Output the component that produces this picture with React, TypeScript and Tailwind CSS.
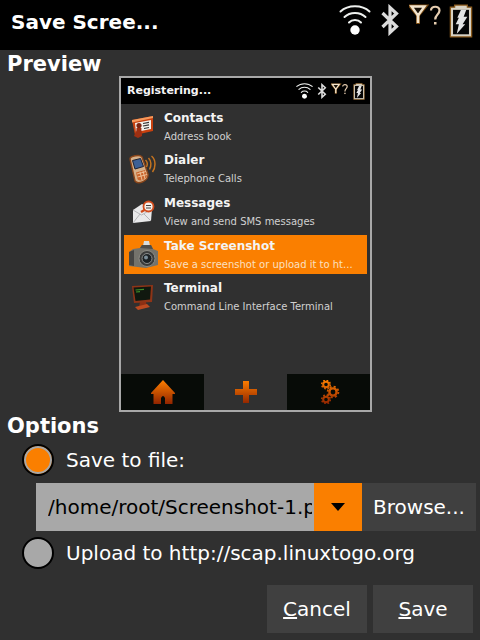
import { useState } from "react";

type IconProps = { className?: string };

function WifiIcon({ className }: IconProps) {
  return (
    <svg viewBox="0 0 32 30" className={className} fill="none" stroke="#eef0ee" strokeLinecap="round">
      <path d="M1.500 6.500C9-.5 23-.5 30.500 6.500" strokeWidth="2" />
      <path d="M5.500 12C11 6.500 21 6.500 26.500 12" strokeWidth="2" />
      <path d="M10 17.500C13 14.300 19 14.300 22 17.500" strokeWidth="2" />
      <circle cx="16" cy="25" r="4.700" fill="#fff" stroke="none" />
    </svg>
  );
}

function BluetoothIcon({ className }: IconProps) {
  return (
    <svg viewBox="0 0 18 32" className={className} fill="none" stroke="#dcdcdc" strokeWidth="3.200">
      <path d="M1.500 9 15.500 22.500 9 28.500V3.500L15.500 9.500 1.500 23" />
    </svg>
  );
}

function SignalIcon({ className }: IconProps) {
  return (
    <svg viewBox="0 0 32 22" className={className} fill="none">
      <path d="M2 2.500H16L9 11ZM9 2.500V20" stroke="#7a4a10" strokeWidth="4" />
      <path d="M2.500 2.500H15.500L9 11.500Z" fill="#1a1208" stroke="#f3e4cc" strokeWidth="2.400" />
      <path d="M9 9V19" stroke="#f3e4cc" strokeWidth="2.600" />
      <path d="M22 6.500C22 1.500 30.500 1.500 30.500 6.500 30.500 10.500 26.200 10.500 26.200 15.500" stroke="#e6cdb0" strokeWidth="2.200" />
      <rect x="25" y="18" width="2.500" height="2.500" fill="#e6cdb0" />
    </svg>
  );
}

function BatteryIcon({ className }: IconProps) {
  return (
    <svg viewBox="0 0 22 32" className={className}>
      <path d="M5 1H17V3H21V31H1V3H5Z" fill="#d8d2c4" stroke="#8a5a1c" strokeWidth="1.200" />
      <rect x="3.500" y="5.500" width="15" height="23" fill="#050505" />
      <path d="M11 5.500H16L13.500 12H17L12.500 19H15L7 28 9 19H6L9 13H7.500Z" fill="#e4e4e4" />
    </svg>
  );
}

function ContactsIcon() {
  return (
    <svg viewBox="0 0 30 30" className="size-[30px]">
      <path d="M4 8 25 4V19L7 23Z" fill="#c8410f" />
      <path d="M4 8 25 4V6L4 10.500Z" fill="#f59a5c" />
      <path d="M7 11 23 8V17L8 20Z" fill="#f4f1ec" />
      <path d="M15 11.500 21 10.300M15 14 21 12.800M16 16.500 21 15.500" stroke="#333" strokeWidth="1.200" />
      <circle cx="11" cy="13.500" r="2.600" fill="#7d2410" />
      <path d="M6 24C7 21 8.500 21 8.500 16H13.500C13 20 14.500 21 14 24L10 26Z" fill="#9e2f12" />
    </svg>
  );
}

function DialerIcon() {
  return (
    <svg viewBox="0 0 30 30" className="size-[30px]" fill="none">
      <path d="M2 5C2 2 12 0 14 3L20 20C21 27 10 31 7 27Z" fill="#d5b08a" stroke="#8a4519" strokeWidth="1.400" />
      <path d="M4.500 6.500 12.500 4.500 15.500 12.500 7 15Z" fill="#3d6096" stroke="#1c2233" />
      <path d="M8 18.500 17 16 19 21C19 26 11 28 9.500 25Z" fill="#c9652c" />
      <path d="M9 20 18 17.500M9.500 23 19 20.500M12 18 14 26M15 17 17 25" stroke="#f2d0ac" strokeWidth=".8" />
      <path d="M17.500 6C19.500 8 19.500 11 18.500 13M20.500 4C23.500 7 23.500 12 21.500 15.500M23.500 2C28.500 6 27.500 14 24.500 18" stroke="#c4731f" strokeWidth="1.500" />
    </svg>
  );
}

function MessagesIcon() {
  return (
    <svg viewBox="0 0 30 30" className="size-[30px]">
      <path d="M5 13 14 7 24 12 23 24 5 26Z" fill="#e9e9ea" />
      <path d="M5 13 13.500 18 24 12M5 26 12 17M23 24 16 17" fill="none" stroke="#b5b5b8" />
      <circle cx="20.500" cy="9.500" r="5" fill="#f5efe9" stroke="#cf4a1b" strokeWidth="1.800" />
      <path d="M18 8.500H23M18 11H23" stroke="#444" />
      <path d="M16.500 13 13 15" stroke="#cf4a1b" strokeWidth="2.200" />
    </svg>
  );
}

function CameraIcon() {
  return (
    <svg viewBox="0 0 30 30" className="size-[30px]">
      <path d="M16 1H21L22 6H15Z" fill="#d7dde0" />
      <path d="M1 12 5 9 12 8 14 5H23L25 9 30 11V25L18 28 1 26Z" fill="#74736c" />
      <path d="M1 12 6 10V26L1 25Z" fill="#454543" />
      <path d="M12 8 14 5H23L25 9Z" fill="#4d4d4a" />
      <circle cx="19" cy="18.500" r="8" fill="#3b3c3b" stroke="#8e8d86" />
      <circle cx="19" cy="18.500" r="5" fill="#1c2124" stroke="#8b8d8c" />
      <circle cx="18" cy="17.500" r="2" fill="#7b8d98" />
    </svg>
  );
}

function TerminalIcon() {
  return (
    <svg viewBox="0 0 30 30" className="size-[30px]">
      <path d="M12 20H18L19 25H11Z" fill="#8c2f14" />
      <path d="M7 25 19 22 22 25 10 28Z" fill="#bb4a20" />
      <path d="M4 4 25 3 24 20 6 21Z" fill="#8e3417" />
      <path d="M5.500 5.500 23 4.500 22 17.500 7.500 19Z" fill="#10180f" />
      <path d="M7.500 8 16 7.300M8 10 12 9.700" stroke="#3f8f2a" strokeWidth="1.200" />
    </svg>
  );
}

function EmberGradient({ id }: { id: string }) {
  return (
    <linearGradient id={id} x1="0" y1="0" x2="0" y2="24" gradientUnits="userSpaceOnUse">
      <stop offset="0" stopColor="#ff8000" />
      <stop offset="1" stopColor="#902400" />
    </linearGradient>
  );
}

function HomeIcon() {
  return (
    <svg viewBox="0 0 24 24" className="size-6">
      <EmberGradient id="home" />
      <path d="M12 0 24 13V14H21.500V24H14V18Q12 14 10 18V24H2.500V14H0V13Z" fill="url(#home)" />
    </svg>
  );
}

function PlusIcon() {
  return (
    <svg viewBox="0 0 24 24" className="size-6">
      <EmberGradient id="plus" />
      <path d="M9 1H15V9H23V15H15V23H9V15H1V9H9Z" fill="url(#plus)" />
    </svg>
  );
}

function GearsIcon() {
  return (
    <svg viewBox="0 0 24 24" className="size-6" fill="none" stroke="url(#gears)">
      <EmberGradient id="gears" />
      <circle cx="9" cy="4.500" r="2.800" strokeWidth="2" />
      <circle cx="9" cy="4.500" r="4.300" strokeWidth="1.500" strokeDasharray="1.700 1.680" />
      <circle cx="16" cy="12" r="3.600" strokeWidth="2.400" />
      <circle cx="16" cy="12" r="5.400" strokeWidth="1.800" strokeDasharray="2.100 2.140" />
      <circle cx="9" cy="19.500" r="2.800" strokeWidth="2" />
      <circle cx="9" cy="19.500" r="4.300" strokeWidth="1.500" strokeDasharray="1.700 1.680" />
    </svg>
  );
}

const apps = [
  { name: "Contacts", description: "Address book", icon: ContactsIcon },
  { name: "Dialer", description: "Telephone Calls", icon: DialerIcon },
  { name: "Messages", description: "View and send SMS messages", icon: MessagesIcon },
  { name: "Take Screenshot", description: "Save a screenshot or upload it to ht...", icon: CameraIcon, active: true },
  { name: "Terminal", description: "Command Line Interface Terminal", icon: TerminalIcon },
];

function Preview() {
  return (
    <div className="flex w-[253px] flex-col border-2 border-[#a8a8a8]">
      <div className="flex h-[26px] items-center bg-black pr-1 pl-[6px]">
        <span className="flex-1 text-[11px] leading-4 font-bold text-[#f4f4f4]">Registering...</span>
        <div className="flex items-start gap-1">
          <WifiIcon className="h-4 w-[17px]" />
          <BluetoothIcon className="h-4 w-[10px]" />
          <SignalIcon className="h-3 w-[17px]" />
          <BatteryIcon className="h-[17px] w-[14px]" />
        </div>
      </div>

      <ul className="mt-[3px] grid h-[210px] auto-rows-fr gap-[3px] px-[3px]">
        {apps.map(({ name, description, icon: Icon, active }) => (
          <li
            key={name}
            className={
              active
                ? "flex items-center gap-[6px] bg-[#fa7f00] pl-[4px]"
                : "flex items-center gap-[6px] pl-[4px]"
            }
          >
            <Icon />
            <div className="flex flex-col pt-px whitespace-nowrap">
              <span className="text-[12px] leading-[19px] font-bold text-[#f4f4f4]">{name}</span>
              <span className={active ? "text-[10px] leading-[18px] text-[#fbe0c0]" : "text-[10px] leading-[18px] text-[#d0d0d0]"}>
                {description}
              </span>
            </div>
          </li>
        ))}
      </ul>

      <div className="mt-[57px] grid h-9 grid-cols-3">
        <div className="flex items-center justify-center bg-[#070b07]">
          <HomeIcon />
        </div>
        <div className="flex items-center justify-center">
          <PlusIcon />
        </div>
        <div className="flex items-center justify-center bg-[#070b07]">
          <GearsIcon />
        </div>
      </div>
    </div>
  );
}

const radioClass =
  "size-8 shrink-0 appearance-none rounded-full border-2 border-black bg-[#a8a8a8] checked:bg-[#fa7f00] checked:shadow-[inset_0_0_0_2px_#a8a8a8]";

export default function App() {
  const [target, setTarget] = useState("file");
  const [path, setPath] = useState("/home/root/Screenshot-1.png");

  return (
    <div className="flex min-h-screen flex-col bg-[#303030] font-['DejaVu_Sans',sans-serif] text-[20px] leading-6 text-white">
      <header className="flex h-[50px] items-start bg-black pr-[7px] pl-[11px]">
        <h1 className="flex-1 pt-[10px] font-bold">Save Scree...</h1>
        <div className="flex items-start gap-2 pt-1">
          <WifiIcon className="h-8 w-8" />
          <BluetoothIcon className="h-8 w-[22px]" />
          <SignalIcon className="h-[22px] w-8" />
          <BatteryIcon className="h-[34px] w-6" />
        </div>
      </header>

      <main className="flex flex-1 flex-col">
        <h2 className="h-[26px] pt-[2px] pl-[7px] text-[21px] font-bold">Preview</h2>
        <div className="flex justify-center pl-[11px]">
          <Preview />
        </div>

        <h2 className="h-8 pt-[2px] pl-[7px] text-[21px] font-bold">Options</h2>
        <div className="flex items-center gap-3 pl-[22px]">
          <input
            id="to-file"
            type="radio"
            name="target"
            className={radioClass}
            checked={target === "file"}
            onChange={() => setTarget("file")}
          />
          <label htmlFor="to-file">Save to file:</label>
        </div>

        <div className="mt-[7px] flex h-12 pr-1 pl-9">
          <input
            type="text"
            aria-label="File name"
            className="min-w-0 flex-1 bg-[#a8a8a8] pr-[2px] pl-3 text-black outline-none"
            value={path}
            onChange={(e) => setPath(e.target.value)}
          />
          <button type="button" aria-label="Recent files" className="flex w-12 items-center justify-center bg-[#fa7f00]">
            <svg viewBox="0 0 14 8" className="h-2 w-[14px]">
              <path d="M0 0H14L7 8Z" />
            </svg>
          </button>
          <button type="button" className="w-[114px] bg-[#404040]">Browse...</button>
        </div>

        <div className="mt-[6px] flex items-center gap-3 pl-[22px]">
          <input
            id="to-web"
            type="radio"
            name="target"
            className={radioClass}
            checked={target === "web"}
            onChange={() => setTarget("web")}
          />
          <label htmlFor="to-web">Upload to http://scap.linuxtogo.org</label>
        </div>

        <div className="mt-4 flex justify-end gap-[6px] pr-[7px] pb-[7px]">
          <button type="button" className="h-12 w-[100px] bg-[#404040]">
            <u>C</u>ancel
          </button>
          <button type="button" className="h-12 w-[100px] bg-[#404040]">
            <u>S</u>ave
          </button>
        </div>
      </main>
    </div>
  );
}
